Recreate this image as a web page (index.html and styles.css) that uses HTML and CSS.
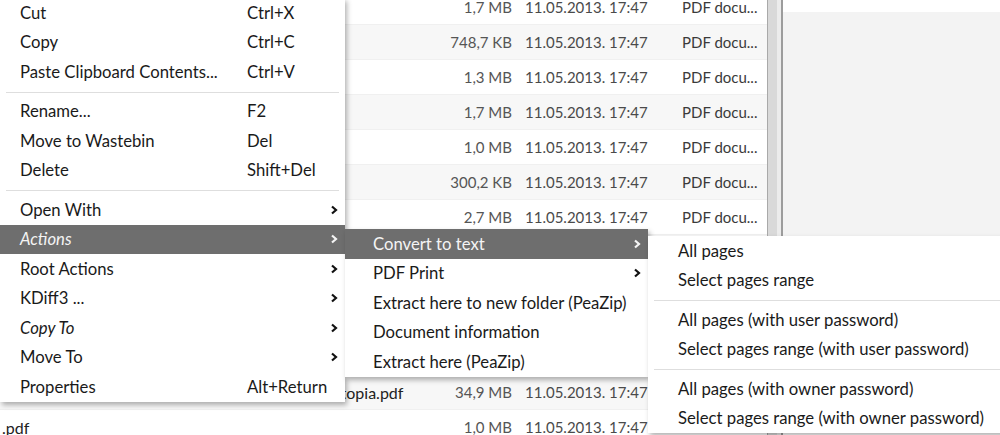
FILE: index.html
```html
<!doctype html>
<html lang="en">
<head>
  <meta charset="UTF-8">
  <meta name="viewport" content="width=device-width, initial-scale=1">
  <title>Dolphin context menu</title>

  <link rel="stylesheet" href="styles.css">
</head>
<body>

<main class="desk">
  <!-- only the parts of the file view that the menus leave uncovered carry text -->
  <div class="files">
    <div class="row"><span class="name"></span><span class="size">1,7 MB</span><span class="date">11.05.2013. 17:47</span><span class="type">PDF docu...</span></div>
    <div class="row alt"><span class="name"></span><span class="size">748,7 KB</span><span class="date">11.05.2013. 17:47</span><span class="type">PDF docu...</span></div>
    <div class="row"><span class="name"></span><span class="size">1,3 MB</span><span class="date">11.05.2013. 17:47</span><span class="type">PDF docu...</span></div>
    <div class="row alt"><span class="name"></span><span class="size">1,7 MB</span><span class="date">11.05.2013. 17:47</span><span class="type">PDF docu...</span></div>
    <div class="row"><span class="name"></span><span class="size">1,0 MB</span><span class="date">11.05.2013. 17:47</span><span class="type">PDF docu...</span></div>
    <div class="row alt"><span class="name"></span><span class="size">300,2 KB</span><span class="date">11.05.2013. 17:47</span><span class="type">PDF docu...</span></div>
    <div class="row"><span class="name"></span><span class="size">2,7 MB</span><span class="date">11.05.2013. 17:47</span><span class="type">PDF docu...</span></div>
    <div class="row alt"></div>
    <div class="row"></div>
    <div class="row alt"></div>
    <div class="row"></div>
    <div class="row alt"><span class="name">Utopia.pdf</span><span class="size">34,9 MB</span><span class="date">11.05.2013. 17:47</span></div>
    <div class="row"><span class="name name-left">.pdf</span><span class="size">1,0 MB</span><span class="date">11.05.2013. 17:47</span></div>
  </div>

  <div class="scrollbar"></div>

  <div class="pane"></div>
</main>

<ul class="menu menu-main">
  <li class="item"><span>Cut</span><span class="key">Ctrl+X</span></li>
  <li class="item"><span>Copy</span><span class="key">Ctrl+C</span></li>
  <li class="item"><span>Paste Clipboard Contents...</span><span class="key">Ctrl+V</span></li>
  <li class="sep"></li>
  <li class="item"><span>Rename...</span><span class="key">F2</span></li>
  <li class="item"><span>Move to Wastebin</span><span class="key">Del</span></li>
  <li class="item"><span>Delete</span><span class="key">Shift+Del</span></li>
  <li class="sep"></li>
  <li class="item sub"><span>Open With</span><span class="key"></span><svg class="arrow" viewBox="0 0 8 10"><path d="M2 1.5 L6 5 L2 8.5"/></svg></li>
  <li class="item sub active"><span class="em">Actions</span><span class="key"></span><svg class="arrow" viewBox="0 0 8 10"><path d="M2 1.5 L6 5 L2 8.5"/></svg></li>
  <li class="item sub"><span>Root Actions</span><span class="key"></span><svg class="arrow" viewBox="0 0 8 10"><path d="M2 1.5 L6 5 L2 8.5"/></svg></li>
  <li class="item sub"><span>KDiff3 ...</span><span class="key"></span><svg class="arrow" viewBox="0 0 8 10"><path d="M2 1.5 L6 5 L2 8.5"/></svg></li>
  <li class="item sub"><span class="em">Copy To</span><span class="key"></span><svg class="arrow" viewBox="0 0 8 10"><path d="M2 1.5 L6 5 L2 8.5"/></svg></li>
  <li class="item sub"><span>Move To</span><span class="key"></span><svg class="arrow" viewBox="0 0 8 10"><path d="M2 1.5 L6 5 L2 8.5"/></svg></li>
  <li class="item"><span>Properties</span><span class="key">Alt+Return</span></li>
</ul>

<ul class="menu menu-actions">
  <li class="item sub active"><span>Convert to text</span><svg class="arrow" viewBox="0 0 8 10"><path d="M2 1.5 L6 5 L2 8.5"/></svg></li>
  <li class="item sub"><span>PDF Print</span><svg class="arrow" viewBox="0 0 8 10"><path d="M2 1.5 L6 5 L2 8.5"/></svg></li>
  <li class="item"><span>Extract here to new folder (PeaZip)</span></li>
  <li class="item"><span>Document information</span></li>
  <li class="item"><span>Extract here (PeaZip)</span></li>
</ul>

<ul class="menu menu-convert">
  <li class="item"><span>All pages</span></li>
  <li class="item"><span>Select pages range</span></li>
  <li class="sep"></li>
  <li class="item"><span>All pages (with user password)</span></li>
  <li class="item"><span>Select pages range (with user password)</span></li>
  <li class="sep"></li>
  <li class="item"><span>All pages (with owner password)</span></li>
  <li class="item"><span>Select pages range (with owner password)</span></li>
</ul>

</body>
</html>
```

FILE: styles.css
```css
* {
    margin: 0;
    padding: 0;
    box-sizing: border-box;
}

html, body {
    width: 1000px;
    height: 435px;
    overflow: hidden;
    background-color: #fff;
    font-family: Lato, "Open Sans", sans-serif;
}

/* file view behind the menus */

.desk {
    display: flex;
    height: 435px;
}

.files {
    width: 767px;
    margin-top: -10px;
    color: #555;
    font-size: 15px;
}

.row {
    display: flex;
    align-items: center;
    height: 35px;
    background-color: #fff;
    border-bottom: 1px solid #f0f0f0;
}

.row.alt {
    background-color: #f7f7f7;
}

.row .name {
    width: 375px;
    padding-left: 329px;
    color: #222;
    font-size: 16px;
    white-space: nowrap;
}

.row .name-left {
    padding-left: 2px;
}

.row .size {
    width: 137px;
    text-align: right;
}

.row .date {
    width: 170px;
    padding-left: 13px;
    color: #4a4a4a;
}

.row .type {
    color: #3a3a3a;
    white-space: nowrap;
}

.scrollbar {
    width: 16px;
    background-color: #d9d9d9;
    border-left: 1px solid #a9a9a9;
    border-right: 2px solid #9c9c9c;
    box-shadow: inset -4px 0 0 #ececec;
}

.pane {
    flex: 1;
    margin-top: 12px;
    height: 226px;
    background-color: #f3f3f3;
}

/* popup menus */

.menu {
    position: absolute;
    list-style: none;
    background-color: #fff;
    color: #1a1a1a;
    font-size: 16.7px;
    box-shadow: 2px 3px 5px rgba(0, 0, 0, 0.3);
}

.menu-main {
    left: 0;
    top: -2px;
    width: 345px;
}

.menu-actions {
    left: 345px;
    top: 229px;
    width: 303px;
}

.menu-convert {
    left: 648px;
    top: 236px;
    width: 370px;
}

.item {
    display: flex;
    align-items: center;
    height: 29.5px;
    white-space: nowrap;
}

.menu-main .item {
    display: grid;
    grid-template-columns: 1fr 80px 14px;
    padding: 0 4px 0 20px;
}

.menu-actions .item {
    display: grid;
    grid-template-columns: 1fr 14px;
    padding: 0 4px 0 28px;
}

.menu-convert .item {
    padding-left: 30px;
}

.item .em {
    font-style: italic;
}

.item.active {
    background-color: #6e6e6e;
    color: #f4f4f4;
}

.arrow {
    width: 8px;
    height: 10px;
    justify-self: center;
    fill: none;
    stroke: #111;
    stroke-width: 2.2;
}

.item.active .arrow {
    stroke: #f4f4f4;
}

.sep {
    height: 10px;
    margin: 0 6px;
    border-bottom: 1px solid #dedede;
    transform: translateY(-4px);
}
```
